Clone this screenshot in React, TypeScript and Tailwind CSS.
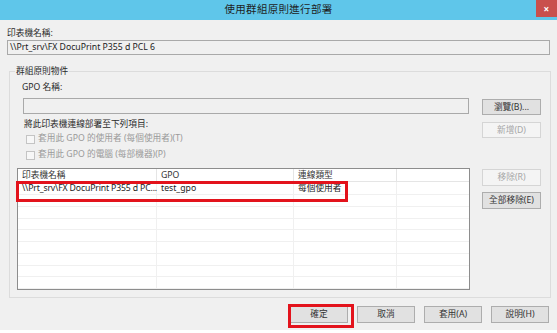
import React from "react";

const FONT = {
  fontFamily: '"Noto Sans", "Noto Sans CJK TC", sans-serif',
};

function Btn({ label, disabled, className = "" }: { label: string; disabled?: boolean; className?: string }) {
  return (
    <div
      className={`flex items-center justify-center text-[8.7px] leading-none border ${
        disabled
          ? "bg-[#f4f4f4] border-[#d5d5d5] text-[#a6a6a6]"
          : "bg-[#e1e1e1] border-[#adadad] text-[#333]"
      } ${className}`}
    >
      {label}
    </div>
  );
}

function CheckRow({ label }: { label: string }) {
  return (
    <div className="flex items-center h-[16px] ml-[16px] text-[#9a9a9a]">
      <div className="w-[9px] h-[9px] border border-[#c4c4c4] bg-[#f7f7f7]" />
      <span className="ml-[3px]">{label}</span>
    </div>
  );
}

const cols = ["w-[139px]", "w-[137px]", "w-[103px]", "flex-1"];

function Row({ cells }: { cells: string[] }) {
  return (
    <div className="flex h-[13px] border-b border-[#f0f0f0]">
      {cols.map((c, i) => (
        <div
          key={i}
          className={`${c} ${i < 3 ? "border-r border-[#f0f0f0]" : ""} ${
            i === 0 ? "tracking-[-0.15px]" : ""
          } pl-[4px] leading-[12px] whitespace-nowrap text-[#222]`}
        >
          {cells[i] ?? ""}
        </div>
      ))}
    </div>
  );
}

export default function App() {
  const headers = ["印表機名稱", "GPO", "連線類型", ""];
  return (
    <div className="relative w-[557px] h-[333px] bg-white overflow-hidden text-[8.7px] text-[#2a2a2a]" style={FONT}>
      <div className="w-[557px] h-[330px] bg-[#f0f0f0] flex flex-col">
        {/* title bar */}
        <div className="relative h-[20px] bg-[#5fc6ea] flex items-center justify-center text-[10.5px] tracking-[0.3px] text-[#1e1e1e]">
          使用群組原則進行部署
          <div className="absolute right-0 top-0 w-[21px] h-[17px] bg-[#c9504d] flex items-center justify-center text-white text-[10px] font-bold leading-none">
            ×
          </div>
        </div>

        <div className="h-[12px] mt-[7px] ml-[7px] leading-[12px]">印表機名稱:</div>
        <div className="mt-[1px] ml-[7px] w-[543px] h-[15px] border border-[#a9a9a9] bg-[#f0f0f0] pl-[2px] leading-[13px] text-[#222]">
          \\Prt_srv\FX DocuPrint P355 d PCL 6
        </div>

        {/* group box */}
        <div className="relative mt-[16px] ml-[9px] w-[542px] h-[227px] border border-[#dcdcdc] flex flex-col">
          <div className="absolute -top-[7px] left-[5px] px-[1px] bg-[#f0f0f0] leading-[12px]">群組原則物件</div>

          <div className="mt-[9px] ml-[12px] h-[12px] leading-[12px]">GPO 名稱:</div>

          <div className="mt-[5px] flex h-[17px]">
            <div className="ml-[13px] w-[446px] h-[16px] border border-[#a9a9a9] bg-[#f0f0f0]" />
            <Btn label="瀏覽(B)..." className="ml-auto mr-[9px] mt-[1px] w-[59px] h-[16px]" />
          </div>

          <div className="mt-[3px] flex">
            <div className="flex flex-col">
              <div className="ml-[14px] h-[13px] leading-[12px]">將此印表機連線部署至下列項目:</div>
              <CheckRow label="套用此 GPO 的使用者 (每個使用者)(T)" />
              <CheckRow label="套用此 GPO 的電腦 (每部機器)(P)" />
            </div>
            <Btn label="新增(D)" disabled className="ml-auto mr-[9px] mt-[4px] w-[59px] h-[16px]" />
          </div>

          <div className="mt-[5px] flex">
            <div className="ml-[7px] w-[453px] h-[122px] border border-[#8d8d8d] bg-white flex flex-col overflow-hidden">
              <div className="flex h-[13px] border-b border-[#e5e5e5]">
                {cols.map((c, i) => (
                  <div
                    key={i}
                    className={`${c} ${i < 3 ? "border-r border-[#e5e5e5]" : ""} pl-[4px] leading-[12px] text-[#333]`}
                  >
                    {headers[i]}
                  </div>
                ))}
              </div>
              <Row cells={["\\\\Prt_srv\\FX DocuPrint P355 d PC...", "test_gpo", "每個使用者"]} />
              {Array.from({ length: 8 }).map((_, i) => (
                <Row key={i} cells={[]} />
              ))}
            </div>
            <div className="ml-auto mr-[9px] flex flex-col">
              <Btn label="移除(R)" disabled className="mt-[1px] w-[59px] h-[17px]" />
              <Btn label="全部移除(E)" className="mt-[6px] w-[59px] h-[17px]" />
            </div>
          </div>
        </div>

        {/* bottom buttons */}
        <div className="mt-[8px] ml-[290px] flex gap-[9px]">
          <Btn label="確定" className="w-[58px] h-[17px]" />
          <Btn label="取消" className="w-[58px] h-[17px]" />
          <Btn label="套用(A)" className="w-[58px] h-[17px]" />
          <Btn label="說明(H)" className="w-[58px] h-[17px]" />
        </div>
      </div>

      {/* red annotation boxes */}
      <div className="absolute left-[16px] top-[181px] w-[332px] h-[21px] border-[3px] border-[#e3131c]" />
      <div className="absolute left-[288px] top-[304px] w-[66px] h-[24px] border-[3px] border-[#e3131c]" />
    </div>
  );
}
